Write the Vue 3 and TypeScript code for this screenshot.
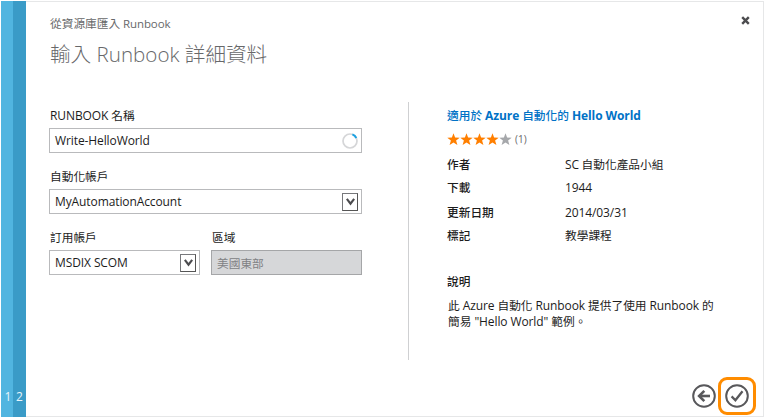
<script setup lang="ts">
interface Detail {
  label: string
  latin?: string
  cjk?: string
  offset: string
}

const details: Detail[] = [
  { label: '作者', latin: 'SC', cjk: '自動化產品小組', offset: 'first' },
  { label: '下載', latin: '1944', offset: 'tall' },
  { label: '更新日期', latin: '2014/03/31', offset: 'first' },
  { label: '標記', cjk: '教學課程', offset: 'first' },
]
const rating = 4
const starPath = 'M6.5 0.3 L8.1 4.6 L12.7 4.7 L9.1 7.5 L10.4 12 L6.5 9.4 L2.6 12 L3.9 7.5 L0.3 4.7 L4.9 4.6 Z'
</script>

<template>
  <div class="page">
    <aside class="steps">
      <div class="step one"><span>1</span></div>
      <div class="step two"><span>2</span></div>
    </aside>
    <main class="dialog">
      <header class="head">
        <div class="titles">
          <div class="crumb">從資源庫匯入<span class="la"> Runbook</span></div>
          <h1>輸入<span class="la"> Runbook </span>詳細資料</h1>
        </div>
        <button class="close" aria-label="關閉">
          <svg width="9" height="9" viewBox="0 0 9 9"><path d="M1.2 1.2 L7.8 7.8 M7.8 1.2 L1.2 7.8" stroke="#4c4c4f" stroke-width="2.4" /></svg>
        </button>
      </header>
      <div class="body">
        <section class="form">
          <label><span class="la caps">RUNBOOK </span>名稱</label>
          <div class="field">
            <span class="la name">Write-HelloWorld</span>
            <svg class="spin" width="16" height="16" viewBox="0 0 16 16" fill="none" stroke-width="1.7">
              <circle cx="8" cy="8" r="7" stroke="#d5d6d8" />
              <path d="M10.4 1.4 A7 7 0 0 1 14.3 5" stroke="#1ba1e2" stroke-width="2" />
            </svg>
          </div>
          <label>自動化帳戶</label>
          <div class="field">
            <span class="la account">MyAutomationAccount</span>
            <span class="arrow"><svg width="9" height="8" viewBox="0 0 9 8"><path d="M0.8 0.8 L4.5 5.7 L8.2 0.8" fill="none" stroke="#4c4c4f" stroke-width="2.2" /></svg></span>
          </div>
          <div class="pair">
            <div class="col">
              <label>訂用帳戶</label>
              <div class="field">
                <span class="la sub">MSDIX SCOM</span>
                <span class="arrow"><svg width="9" height="8" viewBox="0 0 9 8"><path d="M0.8 0.8 L4.5 5.7 L8.2 0.8" fill="none" stroke="#4c4c4f" stroke-width="2.2" /></svg></span>
              </div>
            </div>
            <div class="col">
              <label>區域</label>
              <div class="field disabled"><span>美國東部</span></div>
            </div>
          </div>
        </section>
        <section class="info">
          <h2>適用於<span class="la"> Azure </span>自動化的<span class="la"> Hello World</span></h2>
          <div class="rating">
            <svg v-for="n in 5" :key="n" width="13" height="13" viewBox="0 0 13 13"><path :d="starPath" :class="n <= rating ? 'on' : 'off'" /></svg>
            <span class="count">(1)</span>
          </div>
          <dl>
            <div v-for="d in details" :key="d.label" class="row" :class="d.offset">
              <dt>{{ d.label }}</dt>
              <dd><span v-if="d.latin" class="la">{{ d.latin }}</span><template v-if="d.latin && d.cjk">&nbsp;</template>{{ d.cjk }}</dd>
            </div>
          </dl>
          <h3>說明</h3>
          <p>此<span class="la"> Azure </span>自動化<span class="la"> Runbook </span>提供了使用<span class="la"> Runbook </span>的<br />簡易<span class="la"> "Hello World" </span>範例。</p>
        </section>
      </div>
      <footer class="foot">
        <svg width="24" height="24" viewBox="0 0 24 24" fill="none" stroke="#58585b">
          <circle cx="12" cy="12" r="10.8" stroke-width="2" />
          <path d="M7 12 H18" stroke-width="2.6" />
          <path d="M12.3 6.8 L7.1 12 L12.3 17.2" stroke-width="2.6" />
        </svg>
        <span class="ring">
          <svg width="24" height="24" viewBox="0 0 24 24" fill="none" stroke="#58585b">
            <circle cx="12" cy="12" r="10.8" stroke-width="2" />
            <path d="M6.6 12.4 L10.4 16.2 L17.5 7.3" stroke-width="2.3" />
          </svg>
        </span>
      </footer>
    </main>
  </div>
</template>

<style>
body { background: #fff; }
</style>

<style scoped>
* { box-sizing: border-box; }
.page {
  width: 765px; height: 418px; padding: 1px; display: flex; background: #fff; color: #1c1c1c;
  font: 11.7px/16px "Noto Sans CJK TC", sans-serif;
}
.la { font-family: "Open Sans", sans-serif; font-size: 12px; letter-spacing: -0.1px; white-space: pre; }
.steps { display: flex; width: 25px; height: 416px; }
.step { display: flex; align-items: flex-end; justify-content: center; padding-bottom: 12px; color: #e8f5fb; font: 12px/16px "Open Sans", sans-serif; }
.one { width: 12px; background: #51b5e0; padding-left: 2px; }
.two { width: 13px; background: #3a9bc7; }
.dialog { width: 738px; height: 416px; display: flex; flex-direction: column; border: solid #e6e7e8; border-width: 1px 1px 1px 0; }
.head { display: flex; justify-content: space-between; padding: 13px 13px 0 24px; height: 100px; color: #67686a; }
.crumb { height: 16px; }
.crumb .la { font-size: 11.5px; }
h1 { margin: 7px 0 0; font-size: 20.6px; line-height: 30px; font-weight: 300; color: #67686a; white-space: nowrap; }
h1 .la { font-size: 20.6px; font-weight: 300; letter-spacing: 0; }
.close { display: flex; width: 9px; height: 9px; padding: 0; border: 0; background: none; margin-top: 1px; }
.body { display: flex; height: 258px; }
.form { width: 383px; padding: 5px 46px 0 23px; border-right: 1px solid #cfd0d2; }
label { display: block; height: 21px; padding-left: 1px; white-space: nowrap; }
.field { height: 25px; margin-bottom: 15px; padding: 0 3px 0 5px; display: flex; align-items: center; justify-content: space-between; border: 1px solid #b9babc; background: #fff; }
.form > .field { margin-bottom: 15px; height: 25px; }
.field.disabled { background: #d6d7d9; color: #808184; border-color: #a5a6a8; }
.arrow { width: 16px; height: 18px; display: flex; align-items: center; justify-content: center; border: 1px solid #77787b; border-right-color: #555; border-bottom-color: #555; }
.pair { display: grid; grid-template-columns: 151px 151px; gap: 11px; }
.info { padding: 5px 0 0 38px; width: 330px; }
h2 { margin: 0; font-size: 11.7px; line-height: 16px; font-weight: 500; color: #0072c6; white-space: nowrap; }
h2 .la { font-weight: 700; }
.rating { display: flex; align-items: center; height: 16px; margin-top: 7px; }
.rating .on { fill: #ff7f00; }
.rating .off { fill: #a6a8ab; }
.count { margin-left: 3px; font: 10px/16px "Open Sans", sans-serif; color: #67686a; }
dl { margin: 9px 0 0; height: 93px; }
.row { display: flex; height: 23px; }
.row.tall { height: 25px; }
dt { width: 118px; font-weight: 500; }
dd { margin: 0; white-space: nowrap; }
h3 { margin: 24px 0 0; font-size: 11.7px; line-height: 16px; font-weight: 500; }
p { margin: 8px 0 0 1px; line-height: 15px; white-space: nowrap; }
.foot { display: flex; align-items: center; padding-left: 666px; gap: 2px; margin-top: 17px; height: 38px; }
.ring { display: flex; align-items: center; justify-content: center; width: 38px; height: 38px; border: 3px solid #ff8c00; border-radius: 9px; }
</style>
